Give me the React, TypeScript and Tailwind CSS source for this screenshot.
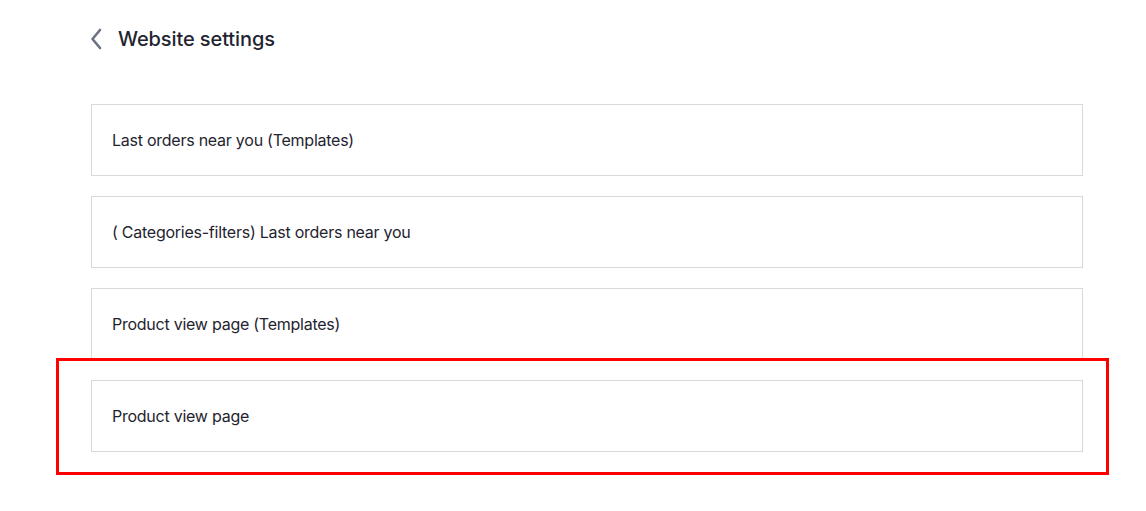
import React from "react";

const items = [
  "Last orders near you (Templates)",
  "( Categories-filters) Last orders near you",
  "Product view page (Templates)",
  "Product view page",
];

export default function App() {
  return (
    <div
      className="relative w-[1146px] h-[511px] bg-white text-[#1f2430]"
      style={{ fontFamily: "Inter, 'Noto Sans', sans-serif" }}
    >
      <div className="pl-[91px] pr-[63px] pt-[27px]">
        <div className="flex items-center h-[24px] -ml-[2px]">
          <svg width="14" height="22" viewBox="0 0 14 22" className="mr-[15px]">
            <path d="M11 2 L3.5 11 L11 20" fill="none" stroke="#6b7280" strokeWidth="2.6" strokeLinecap="round" strokeLinejoin="round" />
          </svg>
          <span className="text-[20px] font-medium tracking-[-0.1px] text-[#1f2430]">Website settings</span>
        </div>
        <div className="mt-[53px] flex flex-col gap-[20px]">
          {items.map((t) => (
            <div
              key={t}
              className="h-[72px] border border-[#d9d9d9] flex items-center pl-[20px] text-[16px] tracking-[-0.25px] text-[#1f2430]"
            >
              {t}
            </div>
          ))}
        </div>
      </div>
      <div className="absolute left-[56px] top-[358px] w-[1053px] h-[117px] border-[3px] border-[#ff0000] pointer-events-none" />
    </div>
  );
}
